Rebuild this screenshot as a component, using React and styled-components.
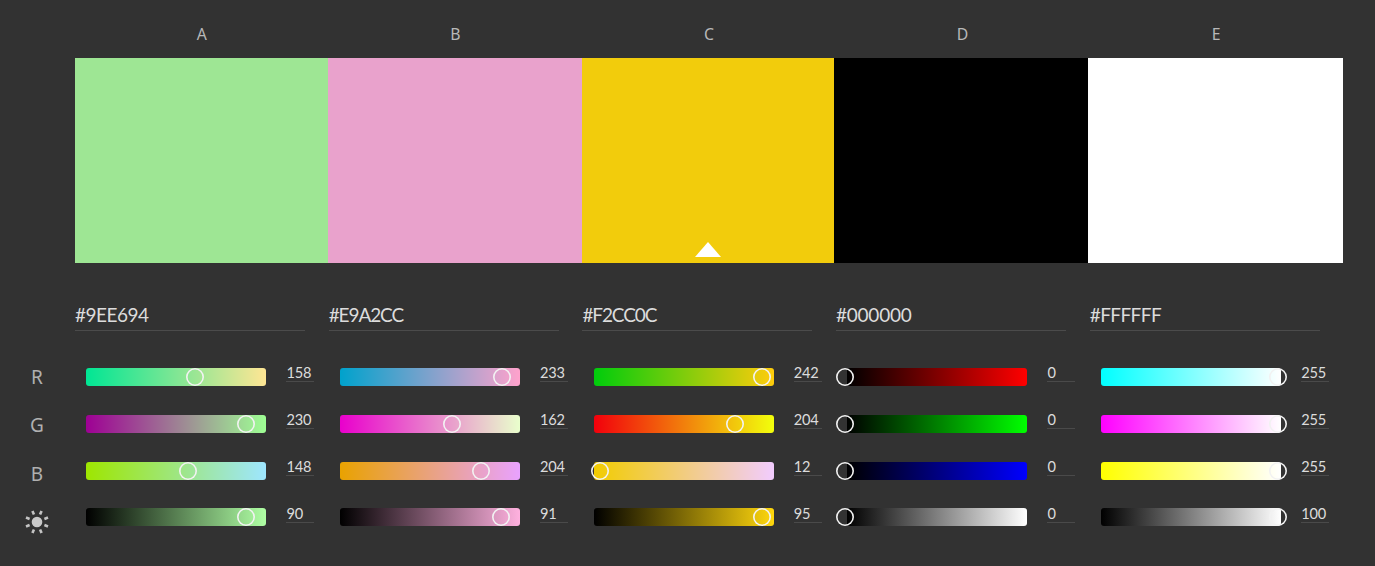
import React from 'react';
import styled, { createGlobalStyle } from 'styled-components';

const GlobalStyle = createGlobalStyle`
  * { box-sizing: border-box; }
  body {
    margin: 0;
    background: #323232;
    font-family: Lato, 'Noto Sans', sans-serif;
    font-weight: 400;
    color: #dcdcdc;
  }
`;

const Page = styled.main`
  width: 1375px;
  height: 566px;
  padding: 24px 32px 0 0;
  display: grid;
  grid-template-columns: 75px 1268px;
  grid-template-rows: 34px 205px 1fr;
  overflow: hidden;
`;

const Letters = styled.header`
  grid-column: 2;
  display: grid;
  grid-template-columns: repeat(5, 253.6px);
`;

const Letter = styled.span`
  text-align: center;
  font-family: 'Noto Sans', sans-serif;
  font-size: 15.8px;
  line-height: 20px;
  color: #b8b8b8;
`;

const Swatches = styled.section`
  grid-column: 2;
  display: grid;
  grid-template-columns: 253px 254px 252px 254px 255px;
`;

const Swatch = styled.div`
  display: flex;
  justify-content: center;
  align-items: flex-end;
  padding: 0 0 6px 0;
  background: ${(p) => p.$color};
`;

const Labels = styled.aside`
  grid-column: 1;
  display: flex;
  flex-direction: column;
  padding-top: 89.4px;
`;

const ChannelLabel = styled.div`
  width: 74px;
  height: 48.6px;
  display: flex;
  align-items: center;
  justify-content: center;
  font-family: 'Noto Sans', sans-serif;
  font-size: 19px;
  color: #b0b0b0;
`;

const Columns = styled.section`
  display: grid;
  grid-template-columns: repeat(5, 253.7px);
`;

const Column = styled.div`
  width: 253px;
  padding-top: 38px;
`;

const Hex = styled.div`
  width: 230px;
  height: 30px;
  border-bottom: 1px solid #4b4b4b;
  font-size: 19px;
  line-height: 27px;
  letter-spacing: ${(p) => p.$track}px;
  white-space: nowrap;
`;

const Sliders = styled.div`
  padding: 22.75px 0 0 11.4px;
`;

const SliderRow = styled.div`
  height: 46.75px;
  display: flex;
  align-items: center;
  gap: 20px;
`;

const Track = styled.div`
  position: relative;
  width: 180px;
  height: 18px;
  border-radius: 3px;
`;

const Handle = styled.span`
  position: absolute;
  top: 0;
  width: 18px;
  height: 18px;
  margin-left: -9px;
  box-shadow: inset 0 0 0 1.6px #f2f2f2;
  border-radius: 50%;
`;

const Value = styled.div`
  width: 28px;
  height: 21px;
  margin-top: -10.5px;
  border-bottom: 1px solid #4a4a4a;
  font-size: 14.6px;
  line-height: 23px;
  letter-spacing: -0.2px;
  white-space: nowrap;
`;

const palette = [
  { letter: 'A', hex: '#9EE694', rgb: [158, 230, 148], brightness: 90, track: -0.5 },
  { letter: 'B', hex: '#E9A2CC', rgb: [233, 162, 204], brightness: 91, track: -1.1 },
  { letter: 'C', hex: '#F2CC0C', rgb: [242, 204, 12], brightness: 95, track: -1.1, base: true },
  { letter: 'D', hex: '#000000', rgb: [0, 0, 0], brightness: 0, track: -0.25 },
  { letter: 'E', hex: '#FFFFFF', rgb: [255, 255, 255], brightness: 100, track: -0.6 },
];

const css = (rgb) => `rgb(${rgb.join(',')})`;

function channelRange(rgb, index) {
  const from = [...rgb];
  const to = [...rgb];
  from[index] = 0;
  to[index] = 255;
  return [css(from), css(to)];
}

function brightnessRange(rgb) {
  const max = Math.max(...rgb);
  const full = max ? rgb.map((c) => Math.round((c * 255) / max)) : [255, 255, 255];
  return ['#000', css(full)];
}

function Slider({ range, value, max }) {
  return (
    <SliderRow>
      <Track style={{ background: `linear-gradient(90deg, ${range[0]}, ${range[1]})` }}>
        <Handle style={{ left: -2.4 + (value / max) * 179.5 }} />
      </Track>
      <Value>{value}</Value>
    </SliderRow>
  );
}

function SunIcon() {
  const rays = [22.5, 67.5, 112.5, 157.5, 202.5, 247.5, 292.5, 337.5];
  return (
    <svg width="26" height="26" viewBox="-13 -13 26 26">
      <circle r="5.3" fill="#c9c9c9" />
      {rays.map((a) => (
        <line key={a} y1="-8" y2="-11.9" stroke="#c4c4c4" strokeWidth="2.6" transform={`rotate(${a})`} />
      ))}
    </svg>
  );
}

function BaseMarker() {
  return (
    <svg width="26" height="15" viewBox="0 0 26 15">
      <path d="M13 0L26 15H0Z" fill="#fff" />
    </svg>
  );
}

export default function App() {
  return (
    <Page>
      <GlobalStyle />
      <Letters>
        {palette.map((c) => <Letter key={c.letter}>{c.letter}</Letter>)}
      </Letters>
      <Swatches>
        {palette.map((c) => (
          <Swatch key={c.hex} $color={c.hex}>{c.base && <BaseMarker />}</Swatch>
        ))}
      </Swatches>
      <Labels>
        <ChannelLabel>R</ChannelLabel>
        <ChannelLabel>G</ChannelLabel>
        <ChannelLabel>B</ChannelLabel>
        <ChannelLabel><SunIcon /></ChannelLabel>
      </Labels>
      <Columns>
        {palette.map((c) => (
          <Column key={c.hex}>
            <Hex $track={c.track}>{c.hex}</Hex>
            <Sliders>
              {c.rgb.map((v, i) => (
                <Slider key={i} range={channelRange(c.rgb, i)} value={v} max={255} />
              ))}
              <Slider range={brightnessRange(c.rgb)} value={c.brightness} max={100} />
            </Sliders>
          </Column>
        ))}
      </Columns>
    </Page>
  );
}
